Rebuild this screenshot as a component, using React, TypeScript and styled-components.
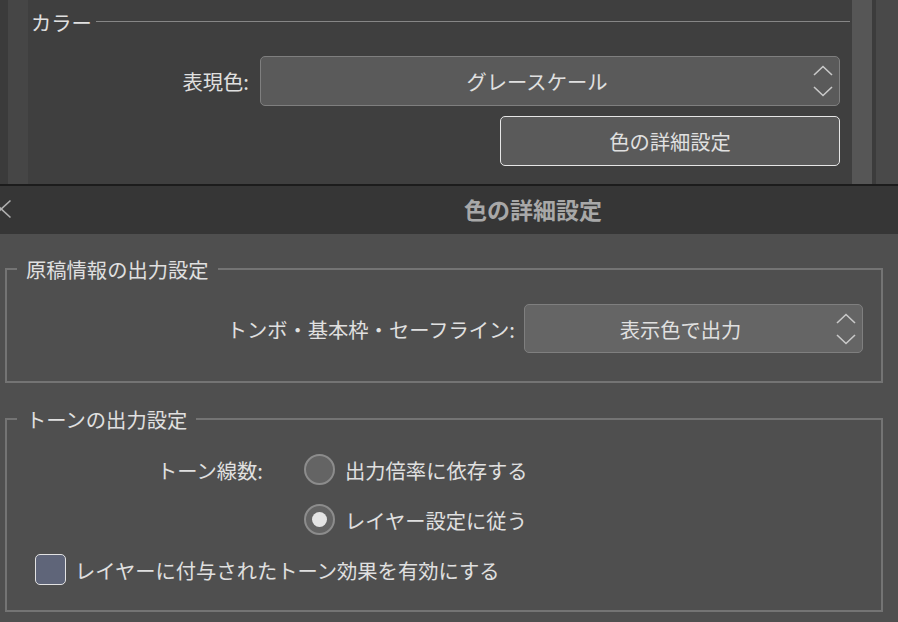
import React from "react";
import styled, { createGlobalStyle } from "styled-components";

const GlobalStyle = createGlobalStyle`
  html, body {
    margin: 0;
    padding: 0;
    background: #3f3f3f;
  }
  body {
    font-family: "Noto Sans CJK JP", "Noto Sans", sans-serif;
  }
  #root {
    width: 898px;
    height: 622px;
    overflow: hidden;
  }
  * { box-sizing: border-box; }
`;

const Screen = styled.div`
  width: 898px;
  height: 622px;
  display: flex;
  flex-direction: column;
  overflow: hidden;
  color: #e0e0e0;
  font-size: 20.3px;
  line-height: 24px;
`;

const TopPanel = styled.div`
  display: flex;
  height: 184px;
  flex-shrink: 0;
`;

const Strip = styled.div<{ $w: number; $bg: string }>`
  width: ${(p) => p.$w}px;
  flex-shrink: 0;
  background: ${(p) => p.$bg};
`;

const PanelContent = styled.div`
  flex: 1;
  background: #3f3f3f;
  padding: 10px 2px 0 3px;
  display: flex;
  flex-direction: column;
`;

const SectionHeader = styled.div`
  display: flex;
  align-items: center;
  gap: 4px;
  height: 24px;
`;

const HeaderRule = styled.div`
  flex: 1;
  height: 1px;
  background: #868686;
  margin-top: -2px;
`;

const FormGrid = styled.div`
  display: grid;
  grid-template-columns: 218px 1fr;
  column-gap: 11px;
  row-gap: 10px;
  margin-top: 22px;
  padding-right: 10px;
  align-items: center;
`;

const FieldLabel = styled.div`
  text-align: right;
  white-space: nowrap;
`;

const SelectBox = styled.div<{ $bg: string; $w?: number; $h: number }>`
  display: flex;
  align-items: center;
  height: ${(p) => p.$h}px;
  width: ${(p) => (p.$w ? `${p.$w}px` : "auto")};
  background: ${(p) => p.$bg};
  border: 1px solid #7f7f7f;
  border-radius: 5px;
  flex-shrink: 0;
`;

const SelectValue = styled.div`
  flex: 1;
  text-align: center;
  white-space: nowrap;
`;

const ChevronIcon = styled.svg`
  width: 20px;
  height: 32px;
  margin-right: 6px;
  flex-shrink: 0;
`;

const ActionButton = styled.button`
  grid-column: 2;
  justify-self: end;
  width: 340px;
  height: 50px;
  background: #5a5a5a;
  border: 1.5px solid #e6e6e6;
  border-radius: 5px;
  color: #e0e0e0;
  font: inherit;
  font-size: 20.3px;
  padding: 0;
`;

const Divider = styled.div`
  height: 2px;
  flex-shrink: 0;
  background: #1c1c1c;
`;

const TitleBar = styled.div`
  height: 48px;
  flex-shrink: 0;
  background: #363636;
  display: grid;
  grid-template-columns: 168px 1fr;
  align-items: center;
`;

const CloseIcon = styled.svg`
  width: 12px;
  height: 20px;
  justify-self: start;
  margin-top: -2px;
`;

const DialogTitle = styled.div`
  text-align: center;
  font-size: 23px;
  font-weight: 700;
  color: #a8a8a8;
  margin-top: -2px;
`;

const DialogBody = styled.div`
  flex: 1;
  background: #4f4f4f;
  padding: 23px 15px 0 5px;
  display: flex;
  flex-direction: column;
  gap: 24px;
`;

const Group = styled.fieldset<{ $pb: number }>`
  margin: 0;
  padding: 0 0 ${(p) => p.$pb}px 0;
  border: 2px solid #747474;
  min-width: 0;
`;

const GroupLegend = styled.legend`
  margin-left: 10px;
  padding: 0 9px;
  font-size: 20.3px;
  line-height: 24px;
  color: #e0e0e0;
`;

const OutputRow = styled.div`
  display: flex;
  justify-content: flex-end;
  align-items: center;
  gap: 9px;
  padding: 23px 18px 0 0;
`;

const ToneGrid = styled.div`
  display: grid;
  grid-template-columns: 256px auto;
  column-gap: 41px;
  row-gap: 19px;
  align-items: center;
  justify-content: start;
  padding-top: 23px;
`;

const ToneLabel = styled.div`
  text-align: right;
  grid-row: 1;
  grid-column: 1;
`;

const RadioOption = styled.label`
  grid-column: 2;
  display: flex;
  align-items: center;
  gap: 10px;
  white-space: nowrap;
`;

const RadioDot = styled.span<{ $checked?: boolean }>`
  width: 31px;
  height: 31px;
  border-radius: 50%;
  border: 2px solid #8c8c8c;
  background: #646464;
  display: flex;
  align-items: center;
  justify-content: center;
  flex-shrink: 0;
  &::after {
    content: "";
    display: ${(p) => (p.$checked ? "block" : "none")};
    width: 15px;
    height: 15px;
    border-radius: 50%;
    background: #e4e4e4;
  }
`;

const CheckRow = styled.label`
  display: flex;
  align-items: center;
  gap: 9px;
  margin-top: 19px;
  padding-left: 28px;
  white-space: nowrap;
`;

const CheckBox = styled.span`
  width: 31px;
  height: 31px;
  border-radius: 5px;
  border: 1px solid #e2e2e2;
  background: #5f6579;
  flex-shrink: 0;
`;

const Chevrons = () => (
  <ChevronIcon viewBox="0 0 20 32">
    <polyline points="1,10 10,1.5 19,10" fill="none" stroke="#c9c9c9" strokeWidth="1.6" />
    <polyline points="1,22 10,30.5 19,22" fill="none" stroke="#c9c9c9" strokeWidth="1.6" />
  </ChevronIcon>
);

export default function App() {
  return (
    <>
      <GlobalStyle />
      <Screen>
        <TopPanel>
          <Strip $w={8} $bg="#3b3b3b" />
          <Strip $w={20} $bg="#464646" />
          <PanelContent>
            <SectionHeader>
              <span>カラー</span>
              <HeaderRule />
            </SectionHeader>
            <FormGrid>
              <FieldLabel>表現色:</FieldLabel>
              <SelectBox $bg="#5a5a5a" $h={50}>
                <SelectValue>グレースケール</SelectValue>
                <Chevrons />
              </SelectBox>
              <ActionButton>色の詳細設定</ActionButton>
            </FormGrid>
          </PanelContent>
          <Strip $w={20} $bg="#565656" />
          <Strip $w={4} $bg="#3c3c3c" />
          <Strip $w={22} $bg="#494949" />
        </TopPanel>
        <Divider />
        <TitleBar>
          <CloseIcon viewBox="0 0 12 20">
            <line x1="10.5" y1="1.5" x2="-8" y2="18.5" stroke="#b0b0b0" strokeWidth="1.6" />
            <line x1="10.5" y1="18.5" x2="-8" y2="1.5" stroke="#b0b0b0" strokeWidth="1.6" />
          </CloseIcon>
          <DialogTitle>色の詳細設定</DialogTitle>
        </TitleBar>
        <DialogBody>
          <Group $pb={28}>
            <GroupLegend>原稿情報の出力設定</GroupLegend>
            <OutputRow>
              <FieldLabel>トンボ・基本枠・セーフライン:</FieldLabel>
              <SelectBox $bg="#656565" $w={339} $h={49}>
                <SelectValue>表示色で出力</SelectValue>
                <Chevrons />
              </SelectBox>
            </OutputRow>
          </Group>
          <Group $pb={25}>
            <GroupLegend>トーンの出力設定</GroupLegend>
            <ToneGrid>
              <ToneLabel>トーン線数:</ToneLabel>
              <RadioOption>
                <RadioDot />
                出力倍率に依存する
              </RadioOption>
              <RadioOption>
                <RadioDot $checked />
                レイヤー設定に従う
              </RadioOption>
            </ToneGrid>
            <CheckRow>
              <CheckBox />
              レイヤーに付与されたトーン効果を有効にする
            </CheckRow>
          </Group>
        </DialogBody>
      </Screen>
    </>
  );
}
